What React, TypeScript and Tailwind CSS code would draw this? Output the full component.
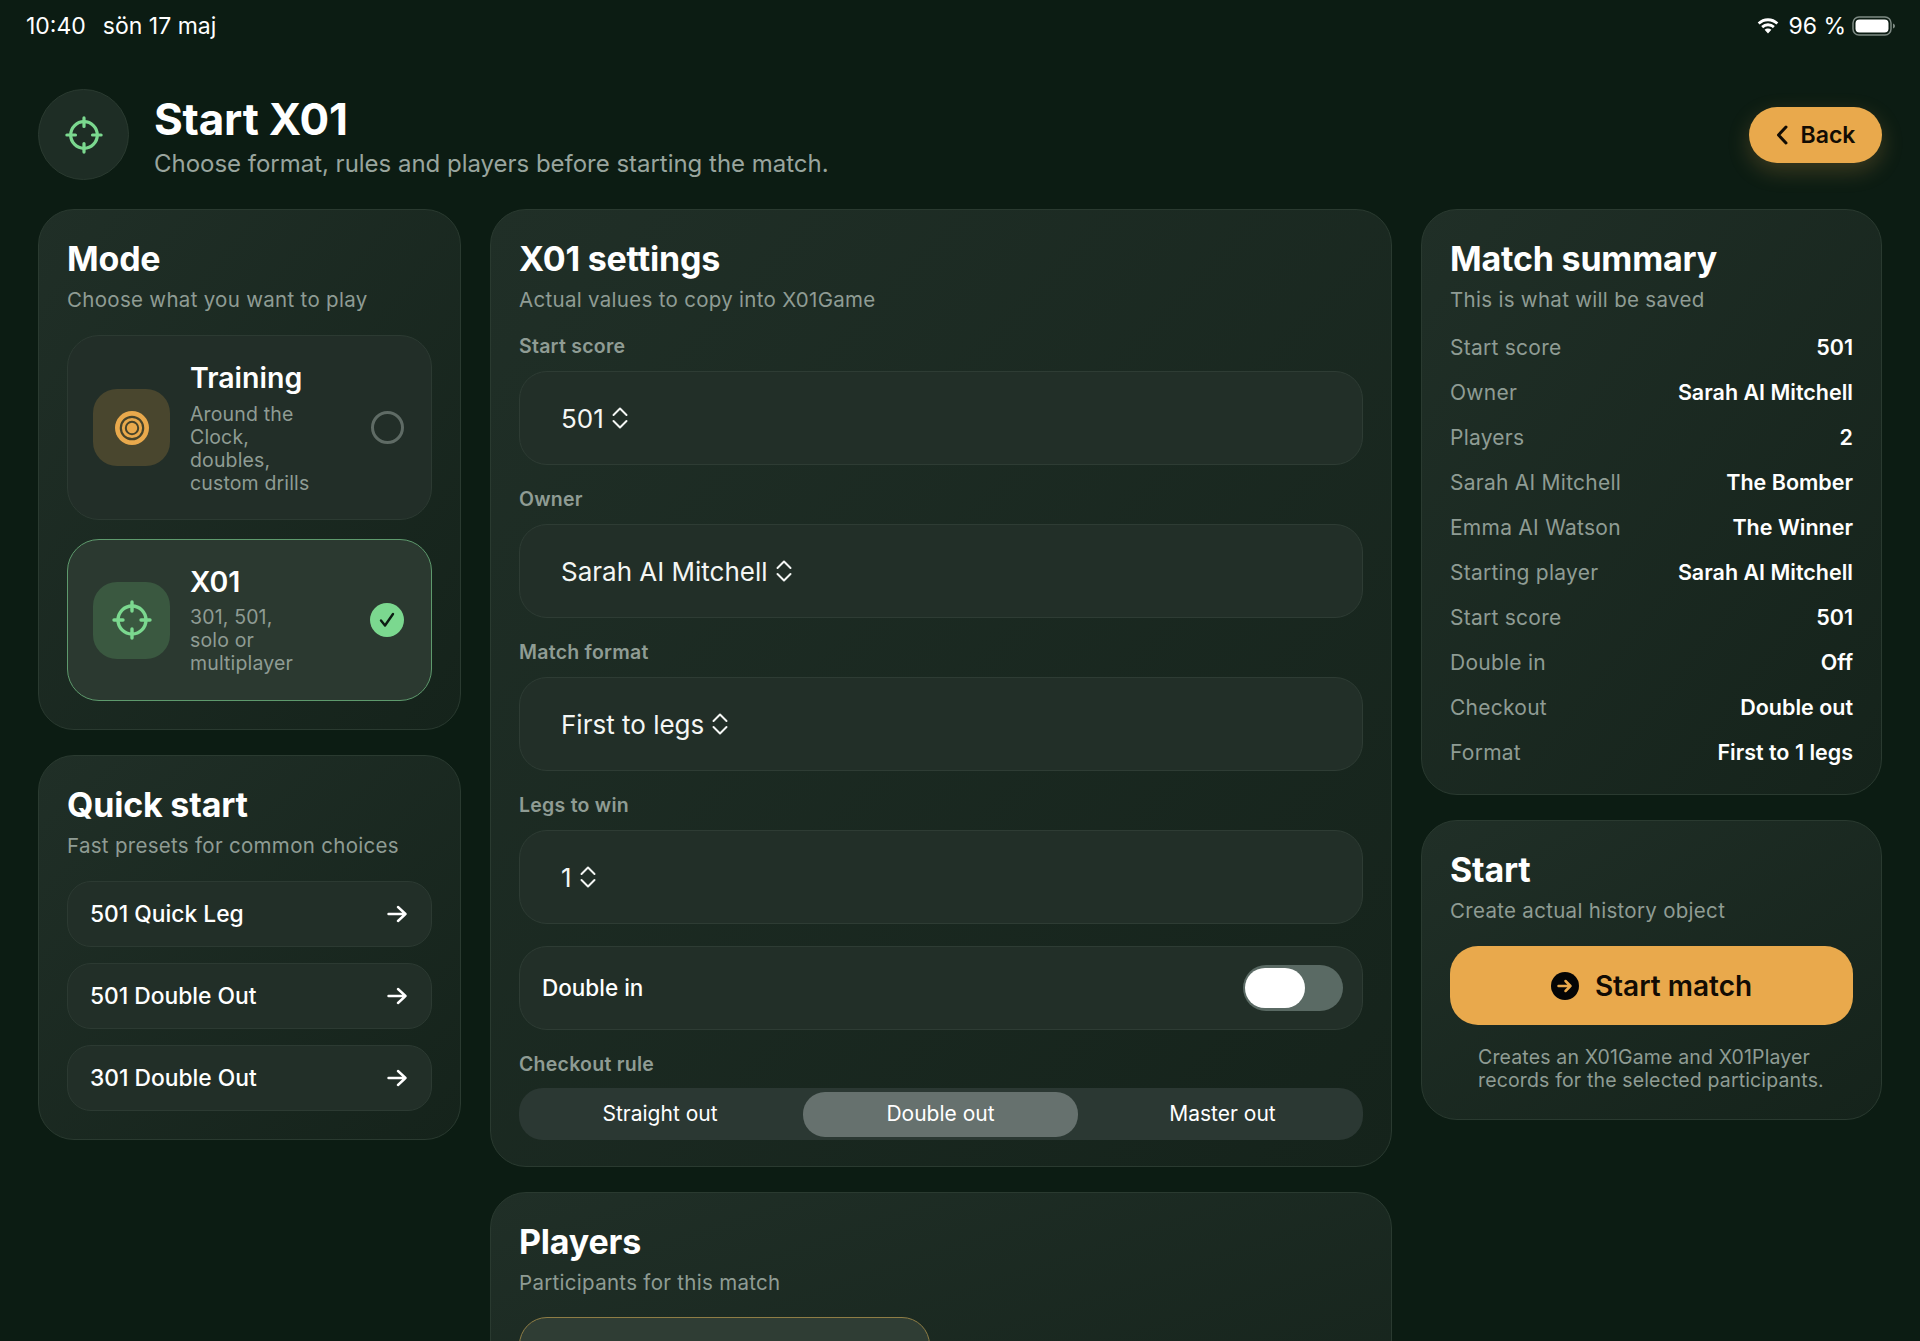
import React from "react";

function Crosshair({ size, sw }: { size: number; sw: number }) {
  return (
    <svg width={size} height={size} viewBox="0 0 40 40" fill="none" stroke="#7bd88f" strokeWidth={sw} strokeLinecap="round">
      <circle cx="20" cy="20" r="14" />
      <path d="M20 2v9M20 29v9M2 20h9M29 20h9" />
    </svg>
  );
}

function Target() {
  return (
    <svg width="34" height="34" viewBox="0 0 34 34" fill="none">
      <circle cx="17" cy="17" r="17" fill="#e9a94c" />
      <circle cx="17" cy="17" r="11.200" stroke="#46432a" strokeWidth="2.200" />
      <circle cx="17" cy="17" r="6.200" stroke="#46432a" strokeWidth="2" />
    </svg>
  );
}

function UpDown() {
  return (
    <svg width="16" height="24" viewBox="0 0 16 24" fill="none" stroke="#f4f6f4" strokeWidth="2" strokeLinecap="round" strokeLinejoin="round">
      <path d="M1.500 9 8 2.500 14.500 9M1.500 15 8 21.500 14.500 15" />
    </svg>
  );
}

function Arrow() {
  return (
    <svg width="20" height="18" viewBox="0 0 20 18" fill="none" stroke="#ffffff" strokeWidth="2.4" strokeLinecap="round" strokeLinejoin="round">
      <path d="M1.500 9h17M11 2l7.500 7-7.500 7" />
    </svg>
  );
}

function Panel({ title, sub, children, className }: { title: string; sub: string; children?: React.ReactNode; className?: string }) {
  return (
    <section className={"rounded-[36px] border border-[#2a3a30] bg-linear-to-br from-[#202f27] to-[#15231b] px-[28px] pt-[29px] " + (className ?? "")}>
      <h2 className="text-[34px] leading-[40px] font-bold tracking-[-0.2px] text-white">{title}</h2>
      <p className="mt-[8px] text-[20.500px] leading-[26px] tracking-[0.3px] text-[#8f9c94]">{sub}</p>
      {children}
    </section>
  );
}

function Field({ label, value }: { label: string; value: string }) {
  return (
    <div>
      <div className="h-[59px] pt-[21px] text-[19.500px] leading-[26px] font-semibold tracking-[0.25px] text-[#8f9c94]">{label}</div>
      <div className="flex h-[94px] items-center gap-[8px] rounded-[28px] border border-[#2e3c34] bg-[#222f28] pl-[41px] text-[26px] text-[#f4f6f4]">
        <span>{value}</span>
        <UpDown />
      </div>
    </div>
  );
}

function Preset({ label }: { label: string }) {
  return (
    <div className="flex h-[66px] items-center justify-between rounded-[24px] border border-[#2c3a32] bg-[#222f28] pl-[22px] pr-[24px] text-[22.800px] font-medium text-white">
      <span>{label}</span>
      <Arrow />
    </div>
  );
}

const rows: [string, string][] = [
  ["Start score", "501"],
  ["Owner", "Sarah AI Mitchell"],
  ["Players", "2"],
  ["Sarah AI Mitchell", "The Bomber"],
  ["Emma AI Watson", "The Winner"],
  ["Starting player", "Sarah AI Mitchell"],
  ["Start score", "501"],
  ["Double in", "Off"],
  ["Checkout", "Double out"],
  ["Format", "First to 1 legs"],
];

export default function App() {
  return (
    <div className="h-[1341px] overflow-hidden bg-[#0c1c13] font-['Inter',sans-serif] text-white">
      <div className="flex h-[52px] items-center justify-between pl-[26px] pr-[24px] text-[23px] text-white">
        <div className="flex gap-[17px]">
          <span>10:40</span>
          <span>sön 17 maj</span>
        </div>
        <div className="flex items-center gap-[6px]">
          <svg width="24" height="18" viewBox="0 0 24 18" fill="#ffffff">
            <path d="M12 4.200c3.300 0 6.200 1.300 8.400 3.400l1.900-2.200A15 15 0 0 0 12 1.200 15 15 0 0 0 1.700 5.400l1.900 2.200A12 12 0 0 1 12 4.200Z" />
            <path d="M12 9.300c1.900 0 3.600.7 4.900 1.900l1.900-2.200A10 10 0 0 0 12 6.300a10 10 0 0 0-6.800 2.700l1.900 2.200A7.200 7.200 0 0 1 12 9.300Z" />
            <path d="M12 11.400c-1.300 0-2.500.5-3.400 1.300L12 16.600l3.400-3.900a5 5 0 0 0-3.400-1.300Z" />
          </svg>
          <span className="ml-[2px]">96 %</span>
          <svg width="44" height="22" viewBox="0 0 44 22" fill="none">
            <rect x="1" y="2" width="38" height="18" rx="6" stroke="#7e8a84" strokeWidth="1.500" />
            <rect x="3.500" y="4.500" width="33" height="13" rx="4" fill="#ffffff" />
            <path d="M41 8.500c1.300.4 2 1.300 2 2.500s-.7 2.100-2 2.500Z" fill="#7e8a84" />
          </svg>
        </div>
      </div>

      <header className="flex h-[157px] items-start justify-between px-[38px] pt-[37px]">
        <div className="flex items-center gap-[25px]">
          <div className="flex h-[91px] w-[91px] items-center justify-center rounded-full border border-[#2a3a30] bg-[#1e2d25]">
            <Crosshair size={38} sw={3.4} />
          </div>
          <div className="pt-[2px]">
            <h1 className="text-[44px] leading-[56px] font-bold tracking-[-0.2px] text-white">Start X01</h1>
            <p className="mt-[1px] text-[24px] leading-[32px] tracking-[-0.02px] text-[#99a59e]">Choose format, rules and players before starting the match.</p>
          </div>
        </div>
        <button className="mt-[18px] flex h-[56px] w-[133px] items-center justify-center gap-[13px] rounded-full bg-[#e9a94c] text-[23px] font-semibold text-[#120c04] shadow-[0_8px_22px_rgba(233,169,76,0.22)]">
          <svg width="12" height="20" viewBox="0 0 12 20" fill="none" stroke="#120c04" strokeWidth="3" strokeLinecap="round" strokeLinejoin="round">
            <path d="M10 2 2.500 10l7.500 8" />
          </svg>
          Back
        </button>
      </header>

      <main className="grid grid-cols-[423px_902px_461px] gap-[29px] px-[38px]">
        <div className="flex flex-col gap-[25px]">
          <Panel title="Mode" sub="Choose what you want to play" className="h-[521px]">
            <div className="mt-[22px] flex flex-col gap-[19px]">
              <div className="flex h-[185px] items-center rounded-[32px] border border-[#2c3a32] bg-[#222e28] pl-[25px] pr-[27px]">
                <div className="flex h-[77px] w-[77px] shrink-0 items-center justify-center rounded-[24px] bg-[#49462e]">
                  <Target />
                </div>
                <div className="ml-[20px] w-[160px]">
                  <div className="mb-[8px] text-[28.500px] leading-[34px] font-semibold text-white">Training</div>
                  <div className="w-[126px] text-[19.500px] leading-[23px] tracking-[0.15px] text-[#8f9c94]">Around the Clock, doubles, custom drills</div>
                </div>
                <div className="ml-auto h-[33px] w-[33px] rounded-full border-[3px] border-[#5f6b65]" />
              </div>
              <div className="flex h-[162px] items-center rounded-[32px] border-[1.500px] border-[#5e9a6d] bg-[#2b3930] pl-[25px] pr-[27px]">
                <div className="flex h-[77px] w-[77px] shrink-0 items-center justify-center rounded-[24px] bg-[#3a5840]">
                  <Crosshair size={40} sw={3.4} />
                </div>
                <div className="ml-[20px] w-[160px]">
                  <div className="mb-[7px] text-[28.500px] leading-[34px] font-semibold text-white">X01</div>
                  <div className="w-[112px] text-[19.500px] leading-[23px] tracking-[0.15px] text-[#8f9c94]">301, 501, solo or multiplayer</div>
                </div>
                <div className="ml-auto flex h-[34px] w-[34px] items-center justify-center rounded-full bg-[#7bd88f]">
                  <svg width="18" height="16" viewBox="0 0 18 16" fill="none" stroke="#0c1c13" strokeWidth="2.400" strokeLinecap="round" strokeLinejoin="round">
                    <path d="m3 8.500 4 5L15 2" />
                  </svg>
                </div>
              </div>
            </div>
          </Panel>
          <Panel title="Quick start" sub="Fast presets for common choices" className="h-[385px]">
            <div className="mt-[22px] flex flex-col gap-[16px]">
              <Preset label="501 Quick Leg" />
              <Preset label="501 Double Out" />
              <Preset label="301 Double Out" />
            </div>
          </Panel>
        </div>

        <div className="flex flex-col gap-[25px]">
          <Panel title="X01 settings" sub="Actual values to copy into X01Game" className="h-[958px]">
            <div className="flex flex-col">
              <div className="-mt-[1px]">
                <Field label="Start score" value="501" />
              </div>
              <Field label="Owner" value="Sarah AI Mitchell" />
              <Field label="Match format" value="First to legs" />
              <Field label="Legs to win" value="1" />
              <div className="mt-[22px] flex h-[84px] items-center justify-between rounded-[28px] border border-[#2e3c34] bg-[#222f28] pl-[22px] pr-[19px]">
                <span className="text-[22.500px] font-medium text-white">Double in</span>
                <div className="flex h-[46px] w-[100px] items-center rounded-full bg-[#5a6a64] pl-[2px]">
                  <div className="h-[40px] w-[60px] rounded-full bg-white" />
                </div>
              </div>
              <div className="mt-[21px] text-[19.500px] leading-[26px] font-semibold tracking-[0.25px] text-[#8f9c94]">Checkout rule</div>
              <div className="mt-[11px] grid h-[52px] grid-cols-[284px_275px_1fr] items-center rounded-[24px] bg-[#2b3833] text-center text-[21px] text-white">
                <span className="pr-[2px]">Straight out</span>
                <span className="flex h-[45px] items-center justify-center rounded-[22px] bg-[#66716e]">Double out</span>
                <span className="pl-[4px]">Master out</span>
              </div>
            </div>
          </Panel>
          <Panel title="Players" sub="Participants for this match" className="h-[300px]">
            <div className="mt-[21px] h-[200px] w-[411px] rounded-[28px] border-[1.500px] border-[#8f7d45] bg-[#2f3d34]" />
          </Panel>
        </div>

        <div className="flex flex-col gap-[25px]">
          <Panel title="Match summary" sub="This is what will be saved" className="h-[586px]">
            <div className="mt-[12px] flex flex-col">
              {rows.map(([k, v], i) => (
                <div key={i} className="flex h-[45px] items-center justify-between text-[21px]">
                  <span className="tracking-[0.25px] text-[#8f9c94]">{k}</span>
                  <span className="text-[21.500px] font-semibold text-white">{v}</span>
                </div>
              ))}
            </div>
          </Panel>
          <Panel title="Start" sub="Create actual history object" className="h-[300px]">
            <button className="mt-[22px] flex h-[79px] w-[403px] items-center justify-center gap-[16px] rounded-[28px] bg-[#e9a94c] text-[28px] font-semibold text-[#120c04]">
              <svg width="28" height="28" viewBox="0 0 28 28">
                <circle cx="14" cy="14" r="14" fill="#050505" />
                <path d="M7.500 14h12M14.500 9l5 5-5 5" fill="none" stroke="#e9a94c" strokeWidth="2.500" strokeLinecap="round" strokeLinejoin="round" />
              </svg>
              Start match
            </button>
            <p className="mt-[21px] pl-[28px] text-[19.500px] leading-[23px] tracking-[0.15px] text-[#8f9c94]">
              Creates an X01Game and X01Player
              <br />
              records for the selected participants.
            </p>
          </Panel>
        </div>
      </main>
    </div>
  );
}
